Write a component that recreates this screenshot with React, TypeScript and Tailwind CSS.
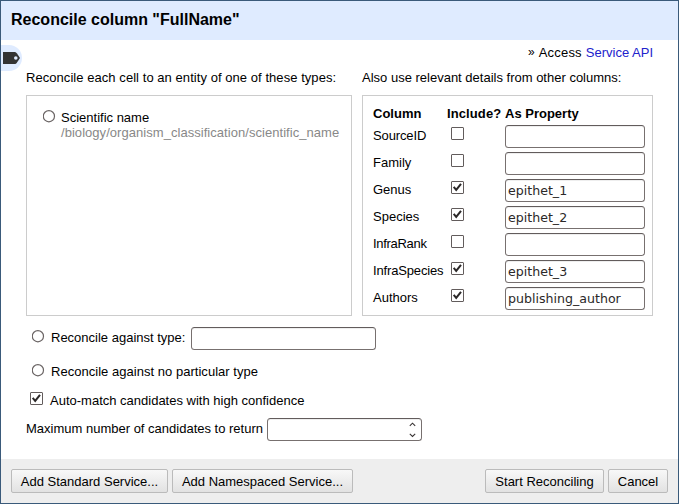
import React from "react";

function Check({ checked = false }: { checked?: boolean }) {
  return (
    <span role="checkbox" aria-checked={checked} className="block size-[13px] shrink-0 rounded-[1px] border border-[#625c5c] bg-white">
      {checked && (
        <svg viewBox="0 0 11 11" className="block size-[11px]">
          <path d="M1.7 4.9 4.2 7.9 9 1.8" fill="none" stroke="#2b2828" strokeWidth="2" />
        </svg>
      )}
    </span>
  );
}

function Radio() {
  return (
    <span role="radio" aria-checked={false} className="block h-[13px] w-[13px] shrink-0">
      <svg viewBox="0 0 13 13" className="block size-[13px]">
        <circle cx="5.9" cy="6.2" r="5.6" fill="#ffffff" stroke="#6a6464" strokeWidth="1.2" />
      </svg>
    </span>
  );
}

function Field({ value = "", className = "" }: { value?: string; className?: string }) {
  return (
    <input
      defaultValue={value}
      className={
        "block h-[23px] rounded-[3.5px] border border-[#77706f] border-t-[#625c5c] bg-white px-[2px] font-['DejaVu_Sans',sans-serif] text-[12.6px] text-[#2b2828] shadow-[inset_0_1px_0_#eeeeee] outline-none " +
        className
      }
    />
  );
}

function Button({ children, className = "" }: { children: React.ReactNode; className?: string }) {
  return (
    <button
      className={
        "h-6 shrink-0 rounded-[2px] border border-[#bbbbbb] bg-linear-to-b from-[#f8f8f8] to-[#e2e2e2] text-center whitespace-nowrap " +
        className
      }
    >
      {children}
    </button>
  );
}

const rows = [
  { name: "SourceID", on: false, property: "", spacing: "tracking-[-0.12px]" },
  { name: "Family", on: false, property: "", spacing: "" },
  { name: "Genus", on: true, property: "epithet_1", spacing: "" },
  { name: "Species", on: true, property: "epithet_2", spacing: "" },
  { name: "InfraRank", on: false, property: "", spacing: "tracking-[-0.3px]" },
  { name: "InfraSpecies", on: true, property: "epithet_3", spacing: "tracking-[-0.15px]" },
  { name: "Authors", on: true, property: "publishing_author", spacing: "" },
];

export default function App() {
  return (
    <div className="flex h-[504px] w-[679px] flex-col overflow-hidden border border-[#3a5a7a] bg-white font-['Liberation_Sans',Arial,sans-serif] text-[13px] leading-[15px] whitespace-nowrap text-black">
      <header className="h-[39px] shrink-0 bg-[#dfebff] pt-[10px] pl-[10px] text-[16px] leading-[18px] font-bold">
        Reconcile column "FullName"
      </header>
      <main className="flex h-[419px] shrink-0">
        <div className="w-[25px] shrink-0 pt-[5px]">
          <div className="h-[26px] w-[21px] rounded-r-[13px] bg-[#dfebff] pt-[7px] pl-[2px]">
            <svg viewBox="0 0 17 12" className="block h-3 w-[17px]">
              <path d="M0 0H12Q13 0 14 1.5L17 6 14 10.5Q13 12 12 12H0Z" fill="#333333" />
              <circle cx="12.8" cy="6" r="1.8" fill="#dfebff" />
            </svg>
          </div>
        </div>
        <div className="w-[627px]">
          <div className="flex h-[30px] justify-end pt-[5px]">
            <span className="mr-1 text-[12px]">»</span>
            <span className="mr-1 tracking-[0.2px]">Access</span>
            <span className="text-[#2222cc]">Service API</span>
          </div>
          <div className="flex gap-[10px]">
            <section className="w-[326px]">
              <h2 className="h-[25px] tracking-[0.055px]">Reconcile each cell to an entity of one of these types:</h2>
              <div className="flex h-[221px] border border-[#cccccc] pt-[14px] pl-4">
                <Radio />
                <div className="ml-[5px]">
                  <div>Scientific name</div>
                  <div className="tracking-[0.045px] text-[#888888]">/biology/organism_classification/scientific_name</div>
                </div>
              </div>
            </section>
            <section className="w-[291px]">
              <h2 className="h-[25px]">Also use relevant details from other columns:</h2>
              <div className="h-[221px] border border-[#cccccc] pt-[10px] pl-[10px]">
                <div className="grid h-[17px] grid-cols-[74px_58px_140px] font-bold">
                  <span>Column</span>
                  <span className="tracking-[0.1px]">Include?</span>
                  <span>As Property</span>
                </div>
                {rows.map((r) => (
                  <div key={r.name} className="grid h-[27px] grid-cols-[78px_54px_140px] pt-[2px]">
                    <span className={"pt-[3px] " + r.spacing}>{r.name}</span>
                    <span className="pt-[2px]"><Check checked={r.on} /></span>
                    <Field value={r.property} className="w-[140px]" />
                  </div>
                ))}
              </div>
            </section>
          </div>
          <div className="mt-[11px] flex h-[23px] pl-[6px]">
            <div className="pt-[3px]"><Radio /></div>
            <span className="mr-[6px] w-[140px] shrink-0 pt-[3px] pl-[6px]">Reconcile against type:</span>
            <Field className="w-[185px]" />
          </div>
          <div className="mt-[14px] flex h-[15px] pl-[6px]">
            <Radio />
            <span className="pl-[6px] tracking-[0.03px]">Reconcile against no particular type</span>
          </div>
          <div className="mt-[13px] flex h-[15px] pl-1">
            <Check checked />
            <span className="pt-px pl-[7px]">Auto-match candidates with high confidence</span>
          </div>
          <div className="mt-[11px] flex h-[23px]">
            <span className="w-[241px] pt-[3px]">Maximum number of candidates to return</span>
            <div className="flex h-[23px] w-[155px] justify-end rounded-[3.5px] border border-[#77706f] border-t-[#625c5c] pr-[5px] shadow-[inset_0_1px_0_#eeeeee]">
              <svg viewBox="0 0 7 21" className="block h-[21px] w-[7px]" fill="none" stroke="#383333" strokeWidth="1.1">
                <path d="M.8 6.8 3.5 4.2 6.2 6.8M.8 14.8 3.5 17.4 6.2 14.8" />
              </svg>
            </div>
          </div>
        </div>
      </main>
      <footer className="flex h-11 gap-[4px] bg-[#eeeeee] px-[10px] pt-[10px]">
        <Button className="w-[157px]">Add Standard Service...</Button>
        <Button className="w-[181px]">Add Namespaced Service...</Button>
        <span className="grow" />
        <Button className="w-[119px]">Start Reconciling</Button>
        <Button className="w-[60px]">Cancel</Button>
      </footer>
    </div>
  );
}
